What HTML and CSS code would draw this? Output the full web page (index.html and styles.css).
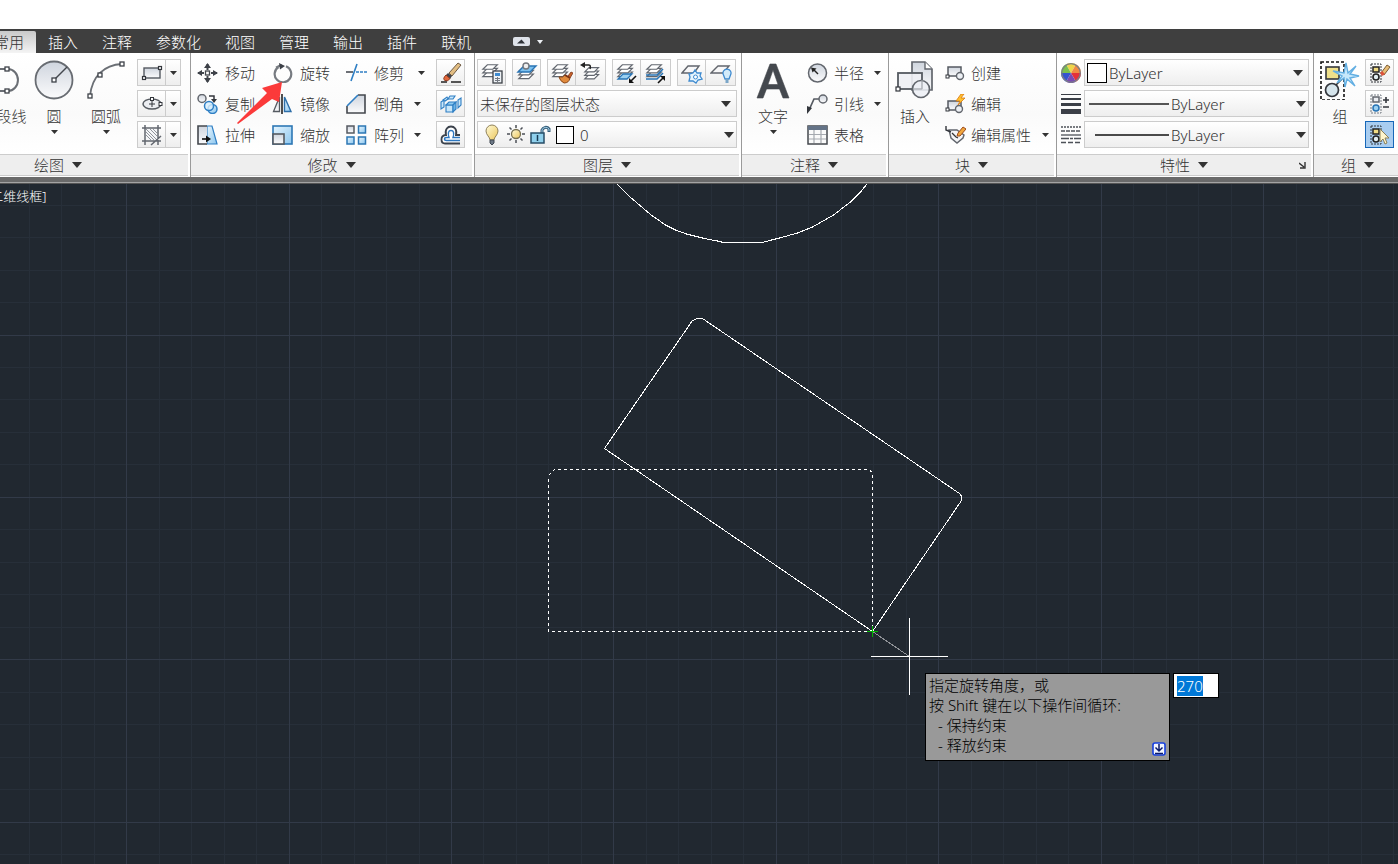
FILE: index.html
```
<!DOCTYPE html>
<html lang="zh-CN">
<head>
<meta charset="utf-8">
<title>CAD</title>
<link rel="stylesheet" href="styles.css">
</head>
<body>
<svg class="defs" aria-hidden="true">
  <defs>
    <linearGradient id="steel" x1="0" y1="0" x2="0" y2="1"><stop offset="0" stop-color="#cfd5de"/><stop offset="1" stop-color="#fbfbfc"/></linearGradient>
    <linearGradient id="sky" x1="0" y1="0" x2="1" y2="1"><stop offset="0" stop-color="#e6f5fe"/><stop offset="1" stop-color="#8cc6ee"/></linearGradient>
    <linearGradient id="gold" x1="0" y1="0" x2="1" y2="1"><stop offset="0" stop-color="#fffbd8"/><stop offset="1" stop-color="#ecc65c"/></linearGradient>
    <symbol id="down" viewBox="0 0 7 4"><path d="M0 0H7L3.500 4Z" fill="#333"/></symbol>
    <symbol id="wide" viewBox="0 0 10 6"><path d="M0 0H10L5 6Z" fill="#333"/></symbol>
    <symbol id="sheets" viewBox="0 0 22 22"><g fill="#fff" stroke="#62676f" stroke-width="1.300"><path d="M2 16H13L18 11H7Z"/><path d="M2 12H13L18 7H7Z"/><path d="M2 8H13L18 3H7Z"/></g></symbol>
  </defs>
</svg>

<header class="ribbon">
  <nav class="tabs">
    <button class="tab tab-on">常用</button><button class="tab">插入</button><button class="tab">注释</button><button class="tab">参数化</button><button class="tab">视图</button><button class="tab">管理</button><button class="tab">输出</button><button class="tab">插件</button><button class="tab">联机</button>
    <button class="fold" aria-label="最小化"><svg width="30" height="10" viewBox="0 0 30 10"><rect x="0" y="0" width="17" height="9" rx="2" fill="#dfe3ea"/><path d="M4 6.500H12L8.500 2.500Z" fill="#2f3238"/><path d="M24 3H30L27 7Z" fill="#eef1f5"/></svg></button>
  </nav>

  <div class="panels">
    <section class="panel panel-draw">
      <div class="body">
        <button class="big big-poly"><svg width="40" height="40" viewBox="0 0 40 40"><path d="M0 9H24A9.500 10.500 0 0 1 24 31H0" fill="none" stroke="#6b6f75" stroke-width="2"/><g fill="#fff" stroke="#3d4148" stroke-width="1.300"><rect x="21" y="7" width="4" height="4"/><rect x="21" y="29" width="4" height="4"/></g></svg><span>多段线</span></button>
        <button class="big"><svg width="40" height="40" viewBox="0 0 40 40"><circle cx="20" cy="20" r="18.500" fill="url(#steel)" stroke="#686c72" stroke-width="1.800"/><path d="M20 20L33 7" stroke="#44484e" stroke-width="1.400"/><rect x="18" y="18" width="4" height="4" fill="#fff" stroke="#3d4148" stroke-width="1.300"/></svg><span>圆</span><svg class="down" width="7" height="4"><use href="#down"/></svg></button>
        <button class="big"><svg width="40" height="40" viewBox="0 0 40 40"><path d="M4 36C6 16 18 5 36 4" fill="none" stroke="#6b6f75" stroke-width="1.800"/><g fill="#fff" stroke="#3d4148" stroke-width="1.300"><rect x="2" y="34" width="4" height="4"/><rect x="12" y="13" width="4" height="4"/><rect x="34" y="2" width="4" height="4"/></g></svg><span>圆弧</span><svg class="down" width="7" height="4"><use href="#down"/></svg></button>
        <div class="stack">
          <div class="split"><button class="tool" aria-label="矩形"><svg width="22" height="20" viewBox="0 0 22 20"><rect x="3" y="5" width="16" height="10" fill="url(#steel)" stroke="#555a61" stroke-width="1.400"/><g fill="#fff" stroke="#33363c" stroke-width="1.200"><rect x="1.500" y="13.500" width="3" height="3"/><rect x="17.500" y="3.500" width="3" height="3"/></g></svg></button><button class="drop" aria-label="更多"><svg width="7" height="4"><use href="#down"/></svg></button></div>
          <div class="split"><button class="tool" aria-label="椭圆"><svg width="22" height="20" viewBox="0 0 22 20"><ellipse cx="11" cy="10" rx="9" ry="5" fill="#eceef2" stroke="#555a61" stroke-width="1.500"/><path d="M11 7V13M8 10H14" stroke="#33363c"/><g fill="#fff" stroke="#33363c"><rect x="9.500" y="3.500" width="3" height="3"/><rect x="18" y="8.500" width="3" height="3"/></g></svg></button><button class="drop" aria-label="更多"><svg width="7" height="4"><use href="#down"/></svg></button></div>
          <div class="split"><button class="tool" aria-label="图案填充"><svg width="22" height="22" viewBox="0 0 22 22"><rect x="4" y="4" width="13" height="13" fill="#f4f5f7"/><path d="M5 8L13 16M5 11L10 16M5 5L16 16M9 5L16 12M12 5L16 9" stroke="#8f949b"/><path d="M4 1V21M17 1V14M1 4H20M1 17H20M17 16V21M10 21L20 12" stroke="#62676f" stroke-width="1.500"/></svg></button><button class="drop" aria-label="更多"><svg width="7" height="4"><use href="#down"/></svg></button></div>
        </div>
      </div>
      <button class="foot">绘图<svg width="10" height="6"><use href="#wide"/></svg></button>
    </section>

    <section class="panel">
      <div class="body modify">
        <button class="cmd"><svg width="21" height="20" viewBox="0 0 21 20"><path d="M10.500 1V7M10.500 13V19M1 10H7M14 10H20" stroke="#44484e" stroke-width="2"/><path d="M7 5L10.500 0L14 5ZM7 15L10.500 20L14 15ZM5 7L0 10L5 13ZM16 7L21 10L16 13Z" fill="#3d4148"/><rect x="8.500" y="8" width="4" height="4" fill="#fff" stroke="#44484e" stroke-width="1.300"/></svg>移动</button>
        <button class="cmd"><svg width="21" height="20" viewBox="0 0 21 20"><path d="M6.500 4A8.300 8.300 0 1 0 14 3.300" fill="none" stroke="#777b81" stroke-width="2.200"/><path d="M4 4.500Q7 2.500 10 2.500" stroke="#777b81" stroke-width="2" fill="none"/><path d="M7 0L13 3L8 6.500Z" fill="#3d4148"/></svg>旋转</button>
        <button class="cmd"><svg width="21" height="20" viewBox="0 0 21 20"><path d="M0 9H7" stroke="#3d4148" stroke-width="1.500"/><path d="M5 18L11 1" stroke="#2f7fc4" stroke-width="1.600"/><path d="M10 9H21" stroke="#2f7fc4" stroke-width="1.500" stroke-dasharray="3 1"/></svg>修剪<svg class="down" width="7" height="4"><use href="#down"/></svg></button>
        <button class="tool" aria-label="删除"><svg width="22" height="22" viewBox="0 0 22 22"><path d="M1 20H7M11 20H21" stroke="#222" stroke-width="1.300"/><path d="M9 11L18 1L21 3L12 14Z" fill="#e2bd82" stroke="#6d5a43"/><path d="M8 11L12 14L10 17L5 14Z" fill="#3e4148"/><path d="M6 13L10 16.500Q8 20 5 18.500T6 13Z" fill="#e2683c" stroke="#8c3a1f"/></svg></button>

        <button class="cmd"><svg width="21" height="20" viewBox="0 0 21 20"><circle cx="5" cy="4.500" r="4" fill="url(#steel)" stroke="#62666d" stroke-width="1.500"/><path d="M12 2H17V6" fill="none" stroke="#33363c" stroke-width="1.500"/><path d="M14 5H20L17 9Z" fill="#33363c"/><circle cx="15.500" cy="15" r="4.500" fill="url(#sky)" stroke="#2f7fc4" stroke-width="1.500"/><circle cx="12" cy="12" r="4.500" fill="#d9effc" fill-opacity=".8" stroke="#2f7fc4" stroke-width="1.500"/></svg>复制</button>
        <button class="cmd"><svg width="21" height="20" viewBox="0 0 21 20"><path d="M1.500 17.500H7.500V3Z" fill="url(#steel)" stroke="#555a61" stroke-width="1.300"/><path d="M10 0V20" stroke="#222" stroke-width="1.600"/><path d="M12.500 3V17.500H19Z" fill="url(#sky)" stroke="#2d6ea8" stroke-width="1.400"/></svg>镜像</button>
        <button class="cmd"><svg width="21" height="20" viewBox="0 0 21 20"><path d="M1 12L12 1H19V19H1Z" fill="url(#steel)"/><path d="M1 12V19H19V1H12" fill="none" stroke="#44484e" stroke-width="1.600"/><path d="M1 12L12 1" stroke="#2f7fc4" stroke-width="1.600"/></svg>倒角<svg class="down down-near" width="7" height="4"><use href="#down"/></svg></button>
        <button class="tool" aria-label="分解"><svg width="22" height="22" viewBox="0 0 22 22"><g fill="#c9e7fa" stroke="#2f7fc4" stroke-width="1.100"><path d="M8 6H13L15 3H10Z"/><path d="M1 9L4 7V14L1 16Z"/><path d="M3 7L7 4L8 6L5 8Z"/><path d="M6 12H13V19H6Z"/><path d="M6 12L9 9H16L13 12Z" fill="#8fcaf0"/><path d="M13 12L16 9V16L13 19Z" fill="#6bb3e6"/><path d="M18 7L21 5V12L18 15Z"/></g></svg></button>

        <button class="cmd"><svg width="21" height="20" viewBox="0 0 21 20"><path d="M10 1H15L20 19H10Z" fill="url(#sky)" stroke="#2f7fc4" stroke-width="1.200"/><path d="M10 1H1V19H10" fill="url(#steel)" stroke="#44484e" stroke-width="1.600"/><path d="M5 14H11" stroke="#111" stroke-width="1.600"/><path d="M9 10.500L14 14L9 17.500Z" fill="#111"/></svg>拉伸</button>
        <button class="cmd"><svg width="21" height="20" viewBox="0 0 21 20"><rect x="1" y="1" width="19" height="18" fill="url(#sky)" stroke="#2d77b4" stroke-width="1.600"/><rect x="1" y="9" width="11" height="10" fill="url(#steel)" stroke="#555a61" stroke-width="1.600"/></svg>缩放</button>
        <button class="cmd"><svg width="21" height="20" viewBox="0 0 21 20"><rect x="1" y="1" width="7" height="7" fill="url(#steel)" stroke="#555a61" stroke-width="1.500"/><g fill="url(#sky)" stroke="#2d77b4" stroke-width="1.500"><rect x="12.500" y="1" width="7" height="7"/><rect x="1" y="12" width="7" height="7"/><rect x="12.500" y="12" width="7" height="7"/></g></svg>阵列<svg class="down down-near" width="7" height="4"><use href="#down"/></svg></button>
        <button class="tool" aria-label="偏移"><svg width="22" height="22" viewBox="0 0 22 22"><path d="M20 11H16C17.500 5 14 2.500 11 2.500S4.500 5 6 11C2.500 11 1.500 13 1.500 15.500S3 19.500 5 19.500H20" fill="#fff" stroke="#3b424c" stroke-width="1.800"/><path d="M20 13.500H13C14.500 9 13.500 6.500 11 6.500S7.500 9 9 13.500H6.500Q4.500 13.500 4.500 15T6.500 16.500H20" fill="none" stroke="#2d77c0" stroke-width="1.400"/></svg></button>
      </div>
      <button class="foot">修改<svg width="10" height="6"><use href="#wide"/></svg></button>
    </section>

    <section class="panel">
      <div class="body layers">
        <div class="bar">
          <div class="group"><button class="tool" aria-label="图层特性"><svg width="22" height="22" viewBox="0 0 22 22"><use href="#sheets" width="20" height="20"/><rect x="12" y="9" width="9" height="12" fill="#eef2f6" stroke="#3d4148" stroke-width="1.300"/><rect x="14" y="11" width="5" height="3" fill="#3f8bd0"/><path d="M14 16.500H19M14 18.500H19M16.500 15V20" stroke="#777c84"/></svg></button></div>
          <div class="group"><button class="tool" aria-label="置为当前"><svg width="22" height="22" viewBox="0 0 22 22"><use href="#sheets" y="2" width="22" height="20"/><path d="M2 10H14L20 4H8Z" fill="#7cc0ee" stroke="#2874b5" stroke-width="1.400"/><circle cx="10" cy="4" r="3" fill="#eee" stroke="#73777e" stroke-width="1.400"/></svg></button></div>
          <div class="group"><button class="tool" aria-label="匹配"><svg width="22" height="22" viewBox="0 0 22 22"><use href="#sheets" width="20" height="20"/><path d="M17 14L20 10L22 11L19 16Z" fill="#c9632c" stroke="#7b3417" stroke-width=".8"/><path d="M8 15Q12 16 14 13L19 16Q18 21 13 21Q9 19 8 15Z" fill="#e08a3c" stroke="#8a4718"/><path d="M14 13L19 16" stroke="#7b3417" stroke-width="2"/></svg></button><button class="tool" aria-label="上一个"><svg width="22" height="22" viewBox="0 0 22 22"><use href="#sheets" x="2" y="3" width="21" height="19"/><path d="M4 3H9Q11 3 10 7" fill="none" stroke="#222" stroke-width="1.500"/><path d="M0 3L5 0V6Z" fill="#222"/></svg></button></div>
          <div class="group"><button class="tool" aria-label="隔离"><svg width="22" height="22" viewBox="0 0 22 22"><use href="#sheets" width="20" height="20"/><path d="M2 17H11L16 12H7Z" fill="#9bd0f1" stroke="#2874b5" stroke-width="1.300"/><path d="M20 14L15 19" stroke="#111" stroke-width="1.600"/><path d="M13 16V21H18Z" fill="#111"/></svg></button><button class="tool" aria-label="取消隔离"><svg width="22" height="22" viewBox="0 0 22 22"><use href="#sheets" width="20" height="20"/><path d="M1 13H12L18 7M1 17H12L18 11" fill="none" stroke="#2874b5" stroke-width="1.600"/><path d="M13 21L18 16" stroke="#111" stroke-width="1.600"/><path d="M15 14H20V19Z" fill="#111"/></svg></button></div>
          <div class="group"><button class="tool" aria-label="冻结"><svg width="22" height="22" viewBox="0 0 22 22"><path d="M1 11H13L18 4H7Z" fill="#f7f7f8" stroke="#62666d" stroke-width="1.400"/><path d="M14 8L16 11L20 11L19 14L21 17L17 18L15 21L12 19L8 19L9 15L8 12L12 11Z" fill="#e6f5fe" stroke="#3f8bd0" stroke-width="1.300"/><circle cx="14.500" cy="15" r="2" fill="#fff" stroke="#3f8bd0"/></svg></button><button class="tool" aria-label="关闭"><svg width="22" height="22" viewBox="0 0 22 22"><path d="M1 11H13L19 4H8Z" fill="#f7f7f8" stroke="#62666d" stroke-width="1.400"/><path d="M15 17L13.500 13A4 4 0 1 1 20.500 13L19 17Z" fill="#d2ebfa" stroke="#3f8bd0" stroke-width="1.300"/><rect x="15.500" y="17" width="3" height="4" fill="#7ba6c8"/></svg></button></div>
        </div>
        <div class="combo"><select aria-label="图层状态"><option>未保存的图层状态</option></select><svg width="10" height="6"><use href="#wide"/></svg></div>
        <div class="combo combo-layer">
          <svg width="68" height="22" viewBox="0 0 68 22"><path d="M5 15C5 12 1 10 1 6A6 6 0 0 1 13 6C13 10 9 12 9 15Z" transform="translate(1 1)" fill="url(#gold)" stroke="#8f815a"/><path d="M6 16H10V19L8 21L6 19Z" fill="#6c7886" stroke="#3f4751"/><circle cx="32" cy="10" r="4.500" fill="url(#gold)" stroke="#777052" stroke-width="1.300"/><path d="M32 1V4M32 16V19M23 10H26M38 10H41M25.500 3.500L27.500 5.500M38.500 3.500L36.500 5.500M25.500 16.500L27.500 14.500M38.500 16.500L36.500 14.500" stroke="#4c5057" stroke-width="1.500"/><path d="M58 10V6A4 4 0 0 1 65 5V8" fill="none" stroke="#365f7b" stroke-width="3"/><path d="M58 10V6A4 4 0 0 1 65 5V7" fill="none" stroke="#9fcbe4" stroke-width="1"/><rect x="47" y="9" width="13" height="10" fill="#8fd0ec" stroke="#274d67" stroke-width="1.500"/><path d="M53.500 11V17" stroke="#173b54" stroke-width="1.500"/></svg>
          <i class="swatch"></i><select aria-label="图层"><option>0</option></select><svg width="10" height="6"><use href="#wide"/></svg>
        </div>
      </div>
      <button class="foot">图层<svg width="10" height="6"><use href="#wide"/></svg></button>
    </section>

    <section class="panel">
      <div class="body notes">
        <button class="big"><svg width="40" height="40" viewBox="0 0 40 40"><path d="M4 38L17 4H23L36 38H30L26.500 29H13.500L10 38ZM15 24.500H25L20 10Z" fill="#44484e" stroke="#44484e" stroke-width=".6"/></svg><span>文字</span><svg class="down" width="7" height="4"><use href="#down"/></svg></button>
        <div class="stack">
          <button class="cmd"><svg width="21" height="20" viewBox="0 0 21 20"><circle cx="10.500" cy="10" r="9" fill="url(#steel)" stroke="#62666d" stroke-width="1.500"/><path d="M11 11L6 6" stroke="#222" stroke-width="1.400"/><path d="M4 4.500L9.500 5.500L5.500 9.500Z" fill="#222"/></svg>半径<svg class="down" width="7" height="4"><use href="#down"/></svg></button>
          <button class="cmd"><svg width="21" height="20" viewBox="0 0 21 20"><path d="M2 16L7 5H12" fill="none" stroke="#555a61" stroke-width="1.700"/><path d="M0 12L5 14L0 20Z" fill="#33363c"/><circle cx="16" cy="5" r="4" fill="url(#steel)" stroke="#62666d" stroke-width="1.500"/></svg>引线<svg class="down" width="7" height="4"><use href="#down"/></svg></button>
          <button class="cmd"><svg width="21" height="20" viewBox="0 0 21 20"><rect x="1" y="1" width="19" height="18" fill="#fafafa" stroke="#44484e" stroke-width="1.500"/><rect x="1" y="1" width="19" height="4" fill="#647387"/><path d="M2 9.500H19M2 14H19M7 5V18M14 5V18" stroke="#a5a9af" stroke-width="1.200"/></svg>表格</button>
        </div>
      </div>
      <button class="foot">注释<svg width="10" height="6"><use href="#wide"/></svg></button>
    </section>

    <section class="panel">
      <div class="body blocks">
        <button class="big"><svg width="40" height="40" viewBox="0 0 40 40"><path d="M17 2H30L37 9V30H17Z" fill="url(#steel)" stroke="#62666d" stroke-width="1.700"/><path d="M30 2V9H37" fill="#fff" stroke="#62666d" stroke-width="1.400"/><rect x="3" y="13" width="24" height="16" fill="#eef0f4" fill-opacity=".9" stroke="#555a61" stroke-width="1.800"/><circle cx="26" cy="29" r="8.500" fill="#eceff4" fill-opacity=".85" stroke="#62666d" stroke-width="1.700"/><path d="M27 20V29H19" fill="none" stroke="#a5a9af"/><rect x="1" y="27" width="4" height="4" fill="#fff" stroke="#33363c" stroke-width="1.200"/></svg><span>插入</span></button>
        <div class="stack">
          <button class="cmd"><svg width="21" height="20" viewBox="0 0 21 20"><rect x="3" y="4" width="13" height="9" fill="url(#steel)" stroke="#555a61" stroke-width="1.500"/><circle cx="15" cy="13" r="3.500" fill="#edf0f4" stroke="#62666d" stroke-width="1.400"/><rect x="1" y="12" width="3" height="3" fill="#fff" stroke="#33363c"/></svg>创建</button>
          <button class="cmd"><svg width="21" height="20" viewBox="0 0 21 20"><rect x="3" y="7" width="13" height="9" fill="url(#steel)" stroke="#555a61" stroke-width="1.500"/><circle cx="14" cy="15" r="3.500" fill="#edf0f4" stroke="#62666d" stroke-width="1.400"/><rect x="1" y="14" width="3" height="3" fill="#fff" stroke="#33363c"/><path d="M16 0L11 7H15L13 11L20 4H16L19 0Z" fill="#ffc02e" stroke="#d97a12" stroke-width=".8"/></svg>编辑</button>
          <button class="cmd"><svg width="21" height="20" viewBox="0 0 21 20"><path d="M4 5H12L19 10L18 13L12 18L6 13Z" fill="#f4f5f7" stroke="#62666d" stroke-width="1.400"/><path d="M1 1V5L6 7" fill="none" stroke="#33363c" stroke-width="1.400"/><path d="M7 8L11 12L13 13" fill="none" stroke="#333" stroke-width="1.300"/><path d="M12 11L13 8L18 2L21 4L15 11Z" fill="#f0a63c" stroke="#9c4b1c"/></svg>编辑属性<svg class="down" width="7" height="4"><use href="#down"/></svg></button>
        </div>
      </div>
      <button class="foot">块<svg width="10" height="6"><use href="#wide"/></svg></button>
    </section>

    <section class="panel">
      <div class="body stack props">
        <div class="prop"><svg width="20" height="20" viewBox="0 0 20 20"><path d="M10 10L5 1.300A10 10 0 0 1 15 1.300Z" fill="#efd54a"/><path d="M10 10L15 1.300A10 10 0 0 1 20 10Z" fill="#f08b43"/><path d="M10 10H20A10 10 0 0 1 15 18.700Z" fill="#e4313a"/><path d="M10 10L15 18.700A10 10 0 0 1 5 18.700Z" fill="#7a4bb2"/><path d="M10 10L5 18.700A10 10 0 0 1 0 10Z" fill="#3553cf"/><path d="M10 10H0A10 10 0 0 1 5 1.300Z" fill="#7cc04d"/><circle cx="10" cy="10" r="9.300" fill="none" stroke="#7a7e86" stroke-width="1.300"/></svg><div class="combo combo-color"><i class="swatch"></i><select aria-label="颜色"><option>ByLayer</option></select><svg width="10" height="6"><use href="#wide"/></svg></div></div>
        <div class="prop"><svg width="20" height="20" viewBox="0 0 20 20"><path d="M0 0H20V1H0ZM0 4H20V6H0ZM0 9H20V12H0ZM0 15H20V20H0Z" fill="#3b3f47"/></svg><div class="combo combo-line"><svg width="80" height="2" viewBox="0 0 80 2"><path d="M0 1H80" stroke="#555" stroke-width="2"/></svg><select aria-label="线宽"><option>ByLayer</option></select><svg width="10" height="6"><use href="#wide"/></svg></div></div>
        <div class="prop"><svg width="20" height="20" viewBox="0 0 20 20"><g fill="none" stroke="#4d5158" stroke-width="1.300"><path d="M0 2H20" stroke-dasharray="2 1"/><path d="M0 6H20" stroke-dasharray="4 1"/><path d="M0 10H20"/><path d="M0 13.500H20" stroke-dasharray="8 1 3 1"/><path d="M0 17.500H20" stroke-dasharray="5 2"/></g></svg><div class="combo combo-line"><svg width="80" height="2" viewBox="0 0 80 2"><path d="M6 1H80" stroke="#111" stroke-width="1.400"/></svg><select aria-label="线型"><option>ByLayer</option></select><svg width="10" height="6"><use href="#wide"/></svg></div></div>
      </div>
      <div class="foot-row"><button class="foot">特性<svg width="10" height="6"><use href="#wide"/></svg></button><button class="launch" aria-label="特性面板"><svg width="7" height="7" viewBox="0 0 7 7"><path d="M0 1L5 5M6 0V6H1" fill="none" stroke="#333" stroke-width="1.400"/></svg></button></div>
    </section>

    <section class="panel panel-group">
      <div class="body">
        <button class="big big-group"><svg width="40" height="40" viewBox="0 0 40 40"><rect x="1" y="2" width="23" height="38" fill="none" stroke="#111" stroke-width="1.600" stroke-dasharray="3 2"/><rect x="6" y="7" width="13" height="12" fill="#efe08a" stroke="#33363c" stroke-width="1.600"/><path d="M15 26L22 19" stroke="#222" stroke-width="1.500"/><circle cx="12" cy="30" r="6.500" fill="#d6e5ec" stroke="#33363c" stroke-width="1.700"/><path d="M26 3L28 13L36 6L30 14L39 16L30 18L35 26L27 19L25 27L24 18L17 23L22 16L13 11L24 13Z" fill="#c6e8fb" stroke="#62aee2" stroke-width="1.400"/></svg><span>组</span></button>
        <div class="stack">
          <button class="tool" aria-label="解除编组"><svg width="22" height="22" viewBox="0 0 22 22"><rect x="2" y="2" width="10" height="18" fill="none" stroke="#33363c" stroke-dasharray="2 1"/><rect x="4" y="5" width="6" height="5" fill="#f1dc84" stroke="#222" stroke-width="1.500"/><circle cx="7" cy="15" r="3" fill="#e2eef2" stroke="#222" stroke-width="1.600"/><path d="M12 11L18 3L21 5L15 13Z" fill="#e8bd76" stroke="#7c5c32"/><path d="M11 11L13 9L16 12L13 14Z" fill="#dd523b"/></svg></button>
          <button class="tool" aria-label="组编辑"><svg width="22" height="22" viewBox="0 0 22 22"><rect x="2" y="2" width="10" height="18" fill="none" stroke="#777c84" stroke-dasharray="2 1"/><rect x="4" y="4" width="6" height="5" fill="#eceef2" stroke="#62666d" stroke-width="1.500"/><circle cx="7" cy="15" r="3" fill="#9bd0f1" stroke="#2874b5" stroke-width="1.500"/><path d="M14 7H20M17 4V10M14 14H20" stroke="#33363c" stroke-width="1.600"/></svg></button>
          <button class="tool tool-on" aria-label="组选择"><svg width="22" height="22" viewBox="0 0 22 22"><rect x="2" y="2" width="10" height="18" fill="none" stroke="#33363c" stroke-dasharray="2 1"/><rect x="4" y="5" width="6" height="5" fill="#f1dc84" stroke="#222" stroke-width="1.500"/><circle cx="7" cy="15" r="3" fill="#e2eef2" stroke="#222" stroke-width="1.600"/><path d="M11 5V18L14 15L16 20L18 19L16 14H20Z" fill="#fff5cc" stroke="#8c8059"/></svg></button>
        </div>
      </div>
      <button class="foot">组<svg width="10" height="6"><use href="#wide"/></svg></button>
    </section>
  </div>
  <svg class="pointer" width="48" height="44" viewBox="0 0 48 44" aria-hidden="true"><path d="M46 1L26 7L31 12L1 42L2 43L36 18L43 21Z" fill="#fb3a3a"/></svg>
</header>

<main class="canvas">
  <svg class="drawing" aria-hidden="true">
    <g transform="translate(0 -184)" fill="none" shape-rendering="crispEdges">
      <path stroke="#272f39" d="M29.500 184V4000M61.500 184V4000M94.500 184V4000M159.500 184V4000M191.500 184V4000M224.500 184V4000M256.500 184V4000M321.500 184V4000M354.500 184V4000M386.500 184V4000M419.500 184V4000M483.500 184V4000M516.500 184V4000M548.500 184V4000M581.500 184V4000M646.500 184V4000M678.500 184V4000M711.500 184V4000M743.500 184V4000M808.500 184V4000M841.500 184V4000M873.500 184V4000M906.500 184V4000M971.500 184V4000M1003.500 184V4000M1036.500 184V4000M1068.500 184V4000M1133.500 184V4000M1166.500 184V4000M1198.500 184V4000M1231.500 184V4000M1296.500 184V4000M1328.500 184V4000M1361.500 184V4000M1393.500 184V4000M0 205.500H4000M0 237.500H4000M0 270.500H4000M0 302.500H4000M0 367.500H4000M0 399.500H4000M0 432.500H4000M0 464.500H4000M0 529.500H4000M0 562.500H4000M0 594.500H4000M0 627.500H4000M0 692.500H4000M0 724.500H4000M0 757.500H4000M0 789.500H4000M0 854.500H4000"/>
      <path stroke="#323a48" d="M126.500 184V4000M289.500 184V4000M451.500 184V4000M613.500 184V4000M776.500 184V4000M938.500 184V4000M1101.500 184V4000M1263.500 184V4000M0 335.500H4000M0 497.500H4000M0 659.500H4000M0 822.500H4000"/>
      <path stroke="#fff" d="M617 184L629.500 196.500L650.500 214.500L665.500 225L675.500 230L686.500 234L704.500 238.500L717.500 241L723.500 242.500H762.500L769.500 240.500L781.500 237.500L797.500 233L812.500 227L833.500 215L850.500 202L860.500 192L867 184"/>
      <path stroke="#fff" d="M604.500 448.500L692.500 320.500L697.500 318.500H702.500L959.500 493.500Q962.500 496.500 961.500 500.500L872.500 631.500Z"/>
      <path stroke="#fff" stroke-dasharray="3 3" d="M548.500 631.500V475.500L554.500 469.500H868.500L872.500 472.500V631.500H548.500"/>
      <path stroke="#8f9297" d="M872.500 631.500L909.500 656.500"/>
      <path stroke="#00b400" d="M872.500 626V637M867 631.500H878"/>
      <path stroke="#fff" d="M909.500 618V695M871 656.500H948"/>
    </g>
  </svg>
  <p class="view-label">[二维线框]</p>
  <div class="prompt">
    <label class="tip" for="angle"><span>指定旋转角度，或</span><span>按 Shift 键在以下操作间循环:</span><span class="item">- 保持约束</span><span class="item">- 释放约束</span>
      <svg class="tip-more" width="14" height="14" viewBox="0 0 14 14"><rect x="1" y="1" width="12" height="12" rx="2" fill="#f2f5ff" stroke="#1740e0" stroke-width="1.600"/><path d="M7 2V8M3.500 5.500L7 9L10.500 5.500M3 11.500H11" fill="none" stroke="#0a1a6b" stroke-width="1.500"/></svg></label>
    <input id="angle" type="text" value="270" autofocus>
  </div>
</main>
<script src="app.js"></script>
</body>
</html>
```
FILE: styles.css
```
* { box-sizing: border-box; }

body {
  margin: 0;
  min-height: 100vh;
  display: flex;
  flex-direction: column;
  background: #fff;
  color: #333;
  font: 300 15px/20px "Noto Sans", "Noto Sans CJK SC", sans-serif;
}

button, select, input { font: inherit; color: inherit; }
button { border: 0; padding: 0; background: none; }
svg { display: block; flex: none; }
.defs { position: absolute; width: 0; height: 0; }

.ribbon {
  position: relative;
  padding-top: 29px;
  overflow: hidden;
}

.tabs {
  display: flex;
  height: 24px;
  padding-top: 2px;
  background: #3f3f3f;
  margin-left: -18px;
}
.tab { padding: 0 12px; color: #fff; white-space: nowrap; }
.tab-on {
  background: linear-gradient(#c9c9c9, #f4f4f4);
  color: #333;
  border-radius: 2px 2px 0 0;
}
.fold { margin-left: 30px; }

.panels {
  display: flex;
  background: linear-gradient(#6a6a6a 5px, #a4a4a4 5px, #a4a4a4 6px, #555 6px) bottom / 100% 7px no-repeat #fff;
  padding-bottom: 7px;
}
.panel {
  flex: none;
  display: flex;
  flex-direction: column;
  padding-bottom: 1px;
  border-right: 1px solid #9a9a9a;
}
.panel-draw { margin-left: -72px; }
.panel-group { flex: 1 0 auto; border-right: 0; }

.body {
  display: flex;
  height: 101px;
  padding: 6px 9px 5px 6px;
  background: linear-gradient(#fff, #fafafa 60%, #fff);
}
.panel-draw .body { padding-left: 52px; }

.foot, .foot-row {
  display: flex;
  align-items: center;
  justify-content: center;
  height: 22px;
}
.foot {
  gap: 8px;
  margin: 0 2px 0 0;
  padding-bottom: 1px;
  border: solid #ccc;
  border-width: 1px 0;
  background: #eee;
}
.foot-row { position: relative; }
.foot-row .foot { flex: 1; }
.launch { position: absolute; right: 7px; top: 8px; }

.big {
  display: flex;
  flex-direction: column;
  align-items: center;
  width: 52px;
  padding-top: 1px;
  white-space: nowrap;
}
.big span { margin-top: 6px; }
.big .down { margin-top: 4px; }
.big-poly { width: 48px; }
.big-group { width: 40px; }

.stack { display: flex; flex-direction: column; gap: 4px; }
.panel-draw .stack { margin-left: 5px; }

.tool, .drop {
  display: flex;
  align-items: center;
  justify-content: center;
  width: 29px;
  height: 27px;
  border: 1px solid #ccc;
  background: linear-gradient(#fff, #eee);
}
.tool-on { background: #a9cdf0; border-color: #1767b8; }
.split, .group { display: flex; }
.drop { width: 16px; margin-left: -1px; }
.group .tool + .tool { margin-left: -1px; width: 31px; }

.cmd {
  display: flex;
  align-items: center;
  gap: 7px;
  height: 27px;
  white-space: nowrap;
}
.cmd .down { margin-left: 7px; }
.cmd .down-near { margin-left: 3px; }

.modify {
  display: grid;
  grid-template-columns: 75px 74px 90px 29px;
  grid-auto-rows: 27px;
  row-gap: 4px;
}

.layers { flex-direction: column; gap: 4px; padding: 6px 4px 5px 2px; }
.bar { display: flex; gap: 6px; }

.combo {
  display: flex;
  align-items: center;
  width: 260px;
  height: 27px;
  padding: 0 5px 0 2px;
  border: 1px solid #ccc;
  background: linear-gradient(#fff, #eee);
}
.combo select {
  flex: 1;
  min-width: 0;
  padding: 0;
  border: 0;
  appearance: none;
  background: none;
}
.swatch { width: 20px; height: 20px; border: 1px solid #000; background: #fff; }
.combo-layer { padding: 0 2px 0 6px; }
.combo-layer .swatch { width: 18px; height: 18px; margin: 0 6px 0 4px; }

.notes { padding: 6px 7px 5px 5px; }
.notes .stack { margin-left: 8px; }
.notes .cmd { gap: 6px; }
.notes .cmd .down { margin-left: 4px; }
.blocks { padding: 6px 7px 5px 0; }
.blocks .stack { margin-left: 4px; }
.blocks .cmd { gap: 5px; }
.blocks .cmd .down { margin-left: 6px; }

.props { padding: 6px 4px 5px 4px; }
.prop { display: flex; align-items: center; gap: 3px; }
.prop .combo { width: 225px; }
.combo-color { padding-left: 2px; }
.combo-color select { margin-left: 2px; }
.prop .combo-line { padding: 0 2px 0 4px; }
.combo-line select { margin-left: 2px; }

.panel-group .stack { margin-left: 5px; }

.pointer { position: absolute; left: 236px; top: 81px; }

.canvas {
  position: relative;
  flex: 1;
  overflow: hidden;
  background: #212830;
}
.drawing { position: absolute; inset: 0; width: 100%; height: 100%; }
.view-label {
  position: relative;
  margin: 2px 0 0 -14px;
  color: #fff;
  font-size: 13px;
}

.prompt {
  position: absolute;
  left: 925px;
  top: 489px;
  display: flex;
  align-items: flex-start;
  gap: 3px;
  color: #000;
}
.tip {
  position: relative;
  display: flex;
  flex-direction: column;
  width: 245px;
  padding: 1px 3px 5px;
  border: 1px solid #000;
  background: #999;
}
.tip .item { padding-left: 9px; }
.tip-more { position: absolute; right: 3px; bottom: 4px; }
.prompt input {
  width: 46px;
  height: 25px;
  padding: 0 3px;
  border: 1px solid #000;
  background: #fff;
  outline: 0;
}
.prompt input::selection { background: #0078d7; color: #fff; }
```
FILE: app.js
```
document.getElementById('angle').select();
```
